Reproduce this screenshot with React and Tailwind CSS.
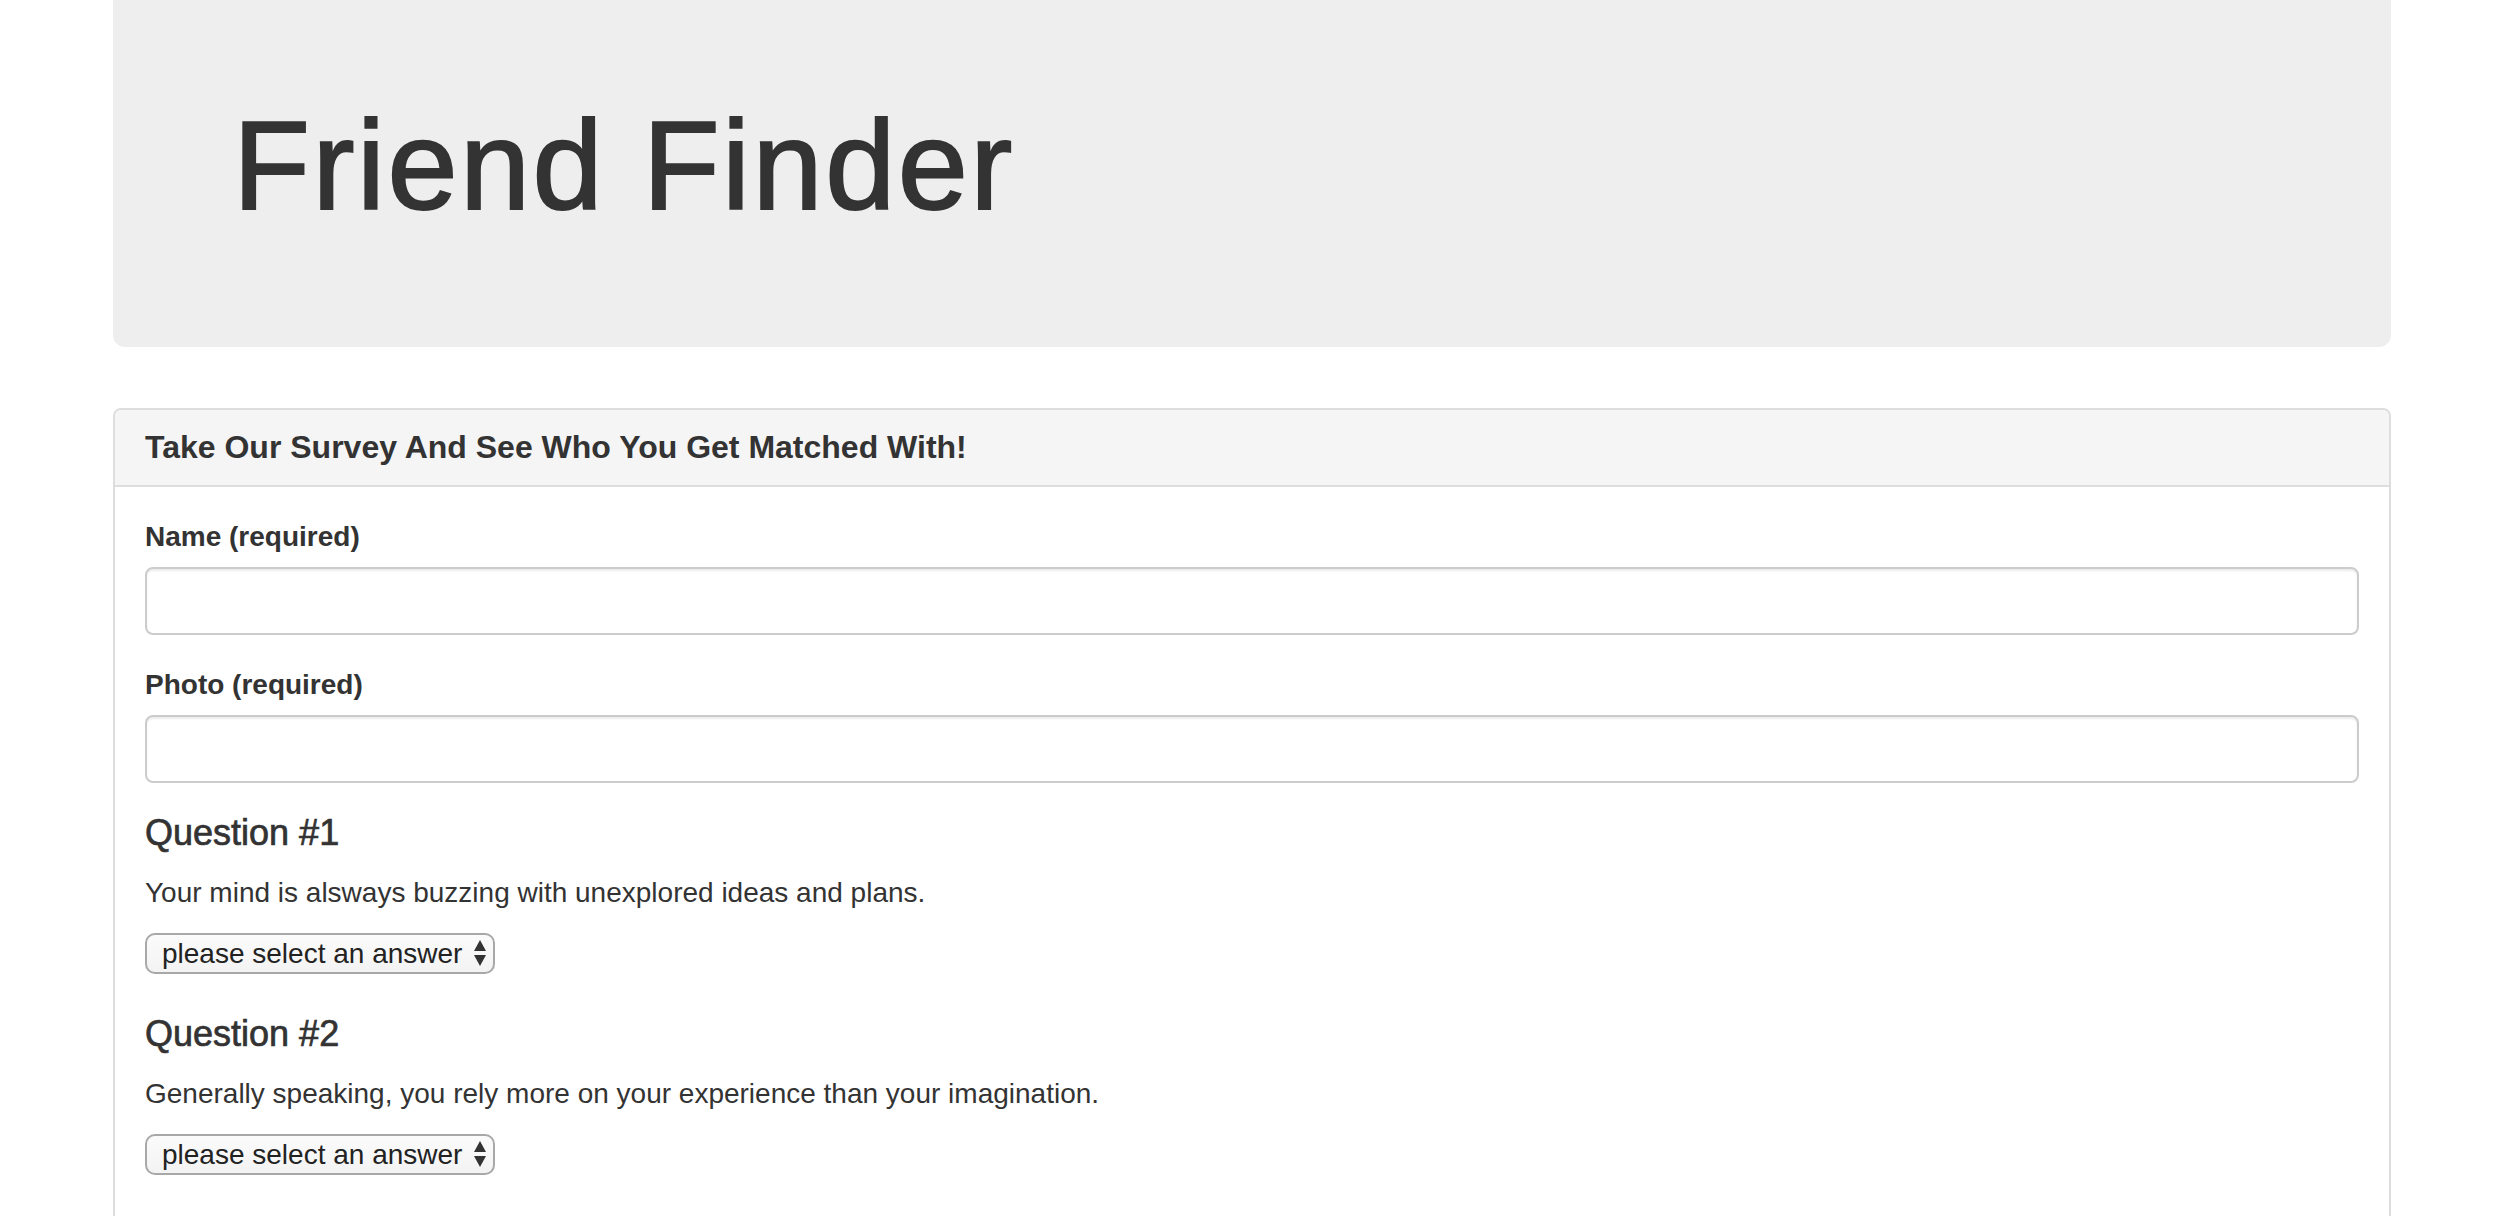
const questions = [
  "Your mind is alsways buzzing with unexplored ideas and plans.",
  "Generally speaking, you rely more on your experience than your imagination.",
  "You find it easy to stay relaxed and focused even when there is some pressure.",
  "You rarely do something just out of sheer curiosity.",
  "People can rarely upset you.",
];

const answers = ["1 (Strongly Disagree)", "2", "3", "4", "5 (Strongly Agree)"];

const SelectArrows = () => (
  <svg
    className="pointer-events-none absolute right-[9px] top-[7px]"
    width="12"
    height="26"
    viewBox="0 0 12 26"
  >
    <path d="M6 0 L12 11 L0 11 Z" fill="#333" />
    <path d="M0 15 L12 15 L6 26 Z" fill="#333" />
  </svg>
);

const Question = ({ num, text }) => (
  <div className="pb-[40px]">
    <h4 className="text-[36px] leading-[40px] font-normal mb-[20px] [-webkit-text-stroke:0.7px_#333]">
      Question #{num}
    </h4>
    <p className="text-[28px] leading-[40px] mb-[20px]">{text}</p>
    <div className="relative w-[350px]">
      <select
        defaultValue=""
        className="appearance-none w-[350px] h-[41px] pl-[15px] pr-[20px] text-[28px] leading-[37px] text-[#222] bg-gradient-to-b from-[#fbfbfb] to-[#f3f3f3] border-2 border-[#a8a8a8] rounded-[10px] outline-none"
      >
        <option value="">please select an answer</option>
        {answers.map((a) => (
          <option key={a} value={a}>
            {a}
          </option>
        ))}
      </select>
      <SelectArrows />
    </div>
  </div>
);

export default function App() {
  return (
    <div className="min-h-screen bg-white text-[#333] font-['Liberation_Sans',Arial,sans-serif] overflow-hidden">
      <div className="ml-[113px] w-[2278px]">
        {/* jumbotron */}
        <div className="bg-[#eeeeee] rounded-b-[12px] px-[120px] pt-[96px] pb-[112px]">
          <h1 className="text-[126px] leading-[139px] font-normal tracking-[2.5px] [-webkit-text-stroke:2px_#333]">
            Friend Finder
          </h1>
        </div>

        {/* survey panel */}
        <div className="mt-[61px] border-2 border-[#dddddd] rounded-[8px]">
          <div className="bg-[#f5f5f5] border-b-2 border-[#dddddd] rounded-t-[6px] px-[30px] pt-[20px] pb-[20px]">
            <h3 className="text-[32px] leading-[35px] font-bold">
              Take Our Survey And See Who You Get Matched With!
            </h3>
          </div>
          <div className="p-[30px]">
            <div className="mb-[30px]">
              <label className="block text-[28px] leading-[40px] font-bold mb-[10px]">Name (required)</label>
              <input
                type="text"
                className="block w-full h-[68px] px-[24px] text-[28px] border-2 border-[#cccccc] rounded-[8px] shadow-[inset_0_2px_2px_rgba(0,0,0,0.075)] outline-none"
              />
            </div>
            <div className="mb-[30px]">
              <label className="block text-[28px] leading-[40px] font-bold mb-[10px]">Photo (required)</label>
              <input
                type="text"
                className="block w-full h-[68px] px-[24px] text-[28px] border-2 border-[#cccccc] rounded-[8px] shadow-[inset_0_2px_2px_rgba(0,0,0,0.075)] outline-none"
              />
            </div>
            {questions.map((q, i) => (
              <Question key={i} num={i + 1} text={q} />
            ))}
          </div>
        </div>
      </div>
    </div>
  );
}
